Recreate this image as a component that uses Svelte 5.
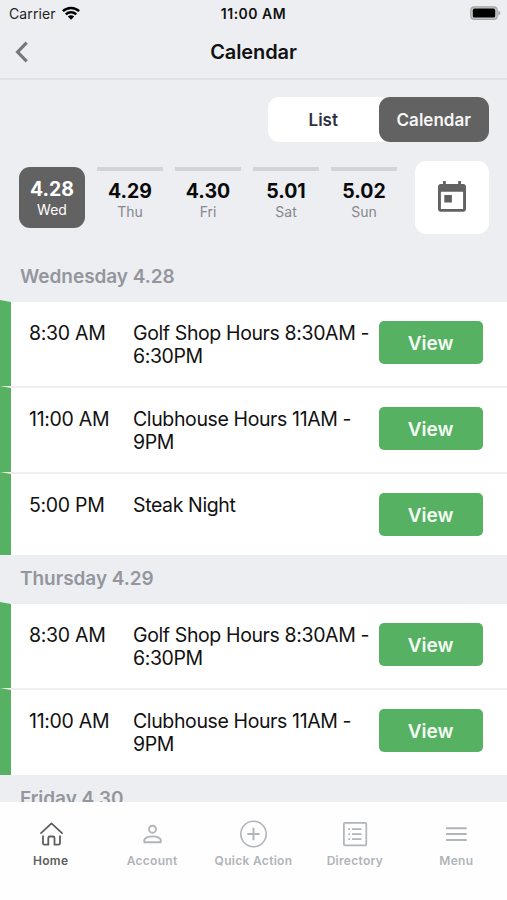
<script>
  const days = [
    { date: '4.28', day: 'Wed', active: true },
    { date: '4.29', day: 'Thu' },
    { date: '4.30', day: 'Fri' },
    { date: '5.01', day: 'Sat' },
    { date: '5.02', day: 'Sun' }
  ];
  const sections = [
    {
      title: 'Wednesday 4.28',
      events: [
        { time: '8:30 AM', lines: ['Golf Shop Hours 8:30AM -', '6:30PM'] },
        { time: '11:00 AM', lines: ['Clubhouse Hours 11AM -', '9PM'] },
        { time: '5:00 PM', lines: ['Steak Night'] }
      ]
    },
    {
      title: 'Thursday 4.29',
      events: [
        { time: '8:30 AM', lines: ['Golf Shop Hours 8:30AM -', '6:30PM'] },
        { time: '11:00 AM', lines: ['Clubhouse Hours 11AM -', '9PM'] }
      ]
    },
    { title: 'Friday 4.30', events: [] }
  ];
</script>

<div class="screen">
  <header>
    <div class="status">
      <div class="carrier">
        <span>Carrier</span>
        <svg width="18" height="14" viewBox="0 0 18 14">
          <g fill="none" stroke="#000" stroke-width="2.5">
            <path d="M0.9 5.2A11.6 11.6 0 0 1 17.1 5.2" />
            <path d="M3.8 8.3A7.4 7.4 0 0 1 14.2 8.3" />
          </g>
          <path d="M9 13.8L5.8 10.5A4.5 4.5 0 0 1 12.2 10.5Z" />
        </svg>
      </div>
      <div class="clock">11:00 AM</div>
      <div class="battery">
        <svg width="31" height="14" viewBox="0 0 31 14">
          <rect x="0.8" y="0.8" width="26.4" height="12.6" rx="3.4" fill="#c9c9cb" stroke="#a5a5a7" stroke-width="1.2" />
          <rect x="2.8" y="2.6" width="22.4" height="9" rx="1.6" />
          <path d="M28.3 4.8Q30.4 5.4 30.4 7.1T28.3 9.4Z" fill="#a5a5a7" />
        </svg>
      </div>
    </div>
    <div class="nav">
      <svg class="back" width="14" height="22" viewBox="0 0 14 22">
        <path d="M11.7 1.6L2.6 11L11.7 20.3" fill="none" stroke="#777" stroke-width="3.2" />
      </svg>
      <h1>Calendar</h1>
    </div>
  </header>

  <main>
    <div class="toggle">
      <button class="list">List</button>
      <button class="selected">Calendar</button>
    </div>
    <div class="days">
      {#each days as d}
        <div class="day" class:active={d.active}>
          <b>{d.date}</b>
          <span>{d.day}</span>
        </div>
      {/each}
      <button class="picker" aria-label="Pick a date">
        <svg width="28" height="31" viewBox="0 0 28 31">
          <path fill="#616161" fill-rule="evenodd" d="M5 0h2.800v3H20.200V0H23v3h2a3 3 0 0 1 3 3V27.800a3 3 0 0 1-3 3H3a3 3 0 0 1-3-3V6a3 3 0 0 1 3-3H5ZM2.900 10.700V28H25.100V10.700Z" />
          <rect x="6.300" y="14" width="7.600" height="7.500" fill="#616161" />
        </svg>
      </button>
    </div>

    {#each sections as s}
      <section>
        <h2>{s.title}</h2>
        {#each s.events as e}
          <div class="row">
            <svg class="stripe" width="11" preserveAspectRatio="none" viewBox="0 0 11 86">
              <path d="M0 0L11 2V86H0Z" fill="#57b163" />
            </svg>
            <div class="time">{e.time}</div>
            <div class="name">
              {#each e.lines as l}<div>{l}</div>{/each}
            </div>
            <button class="view">View</button>
          </div>
        {/each}
      </section>
    {/each}
  </main>

  <nav class="tabs">
    <div class="tab current">
      <svg width="28" height="28" viewBox="0 0 28 28" fill="none" stroke="#5e5e5e" stroke-width="1.8" stroke-linecap="round" stroke-linejoin="round">
        <path d="M4 13.200L14.500 3.400L25 13.200" />
        <path d="M6 16.200V23.300Q6 24.700 7.400 24.700H11.300V18Q11.300 16.500 12.800 16.500H16Q17.500 16.500 17.500 18V24.700H21.600Q23 24.700 23 23.300V16.200" />
      </svg>
      <span>Home</span>
    </div>
    <div class="tab">
      <svg width="28" height="28" viewBox="0 0 28 28" fill="none" stroke="#b1b4b8" stroke-width="1.900">
        <circle cx="14.500" cy="9.200" r="3.500" />
        <path d="M6.300 22.200V20.300C6.300 17.700 10.900 16.400 14.500 16.400S22.800 17.700 22.800 20.300V22.200Z" stroke-linejoin="round" />
      </svg>
      <span>Account</span>
    </div>
    <div class="tab">
      <svg width="28" height="28" viewBox="0 0 28 28" fill="none" stroke="#b1b4b8" stroke-width="1.600">
        <circle cx="14.500" cy="14" r="12.700" />
        <path d="M14.500 7.800V20.200M8.300 14H20.700" stroke-width="1.900" />
      </svg>
      <span>Quick Action</span>
    </div>
    <div class="tab">
      <svg width="28" height="28" viewBox="0 0 28 28" fill="none" stroke="#b1b4b8" stroke-width="1.700">
        <rect x="2.900" y="2.900" width="22.400" height="22.400" rx="1" />
        <path d="M7.300 9.200h1.800M7.300 14.200h1.800M7.300 19.200h1.800M11 9.200H20.500M11 14.200H20.500M11 19.200H20.500" />
      </svg>
      <span>Directory</span>
    </div>
    <div class="tab">
      <svg width="28" height="28" viewBox="0 0 28 28" stroke="#b1b4b8" stroke-width="2">
        <path d="M4.100 8.200H24.700M4.100 14.100H24.700M4.100 19.900H24.700" />
      </svg>
      <span>Menu</span>
    </div>
  </nav>
</div>

<style>
  :global(body) {
    margin: 0;
  }
  .screen {
    width: 507px;
    height: 900px;
    display: flex;
    flex-direction: column;
    overflow: hidden;
    background: #edeef2;
    color: #111;
    font-family: Inter, 'Liberation Sans', sans-serif;
  }
  .screen * {
    box-sizing: border-box;
  }
  button {
    border: 0;
    padding: 0;
    font: inherit;
  }
  header {
    flex: none;
    height: 80px;
    border-bottom: 2px solid #e0e1e4;
  }
  .status {
    height: 28px;
    display: grid;
    grid-template-columns: 1fr auto 1fr;
    align-items: center;
    font-size: 14px;
    line-height: 28px;
  }
  .carrier {
    display: flex;
    align-items: center;
    gap: 6px;
    padding-left: 9px;
    letter-spacing: 0.1px;
    color: #222;
  }
  .carrier svg {
    margin-top: -2px;
  }
  .clock {
    font-weight: 600;
    letter-spacing: 0.5px;
  }
  .battery {
    display: flex;
    justify-content: flex-end;
    padding: 0 6px 2px 0;
  }
  .nav {
    height: 50px;
    display: grid;
    grid-template-columns: 1fr auto 1fr;
    align-items: center;
  }
  .back {
    margin: 0 0 2px 14.5px;
  }
  h1 {
    margin: 0;
    font-size: 20px;
    line-height: 24px;
    font-weight: 600;
    letter-spacing: -0.1px;
    padding-bottom: 2px;
  }
  main {
    flex: 1;
    min-height: 0;
    overflow: hidden;
  }
  .toggle {
    width: 221px;
    height: 45px;
    margin: 17px 18px 0 auto;
    display: flex;
    background: #fff;
    border-radius: 11px;
  }
  .toggle button {
    width: 110.5px;
    border-radius: 11px;
    background: none;
    font-size: 17px;
    font-weight: 600;
    color: #2e3040;
  }
  .toggle .selected {
    background: #626262;
    color: #f6f6f6;
  }
  .days {
    display: flex;
    gap: 12px;
    height: 73px;
    margin: 19px 18px 0 19px;
  }
  .day {
    width: 66px;
    height: 61px;
    margin-top: 6px;
    border-top: 4px solid #d2d3d7;
    display: flex;
    flex-direction: column;
    align-items: center;
    padding-top: 8px;
  }
  .day b {
    font-size: 19.5px;
    line-height: 24px;
    font-weight: 700;
    color: #0a0a0a;
  }
  .day span {
    font-size: 14px;
    line-height: 18px;
    color: #86878c;
  }
  .day.active {
    background: #626262;
    border: 0;
    border-radius: 11px;
    padding-top: 10px;
  }
  .day.active b,
  .day.active span {
    color: #fff;
  }
  .picker {
    margin-left: auto;
    width: 74px;
    border-radius: 11px;
    background: #fff;
    display: flex;
    align-items: center;
    justify-content: center;
  }
  .picker svg {
    margin-bottom: 3px;
  }
  h2 {
    margin: 0;
    height: 49px;
    padding: 11px 0 0 20px;
    font-size: 19px;
    line-height: 26px;
    font-weight: 600;
    letter-spacing: -0.05px;
    color: #93969d;
  }
  section:first-of-type h2 {
    height: 68px;
    padding-top: 30px;
  }
  .row {
    position: relative;
    display: flex;
    align-items: flex-start;
    padding: 19px 24.5px 19px 29px;
    background: #fff;
    font-size: 19.5px;
    line-height: 23px;
  }
  .row:not(:last-child) {
    height: 86px;
    border-bottom: 2px solid #efeff1;
  }
  .row:has(.name div + div):last-child {
    height: 85px;
  }
  .stripe {
    position: absolute;
    left: 0;
    top: -2px;
    height: calc(100% + 2px);
  }
  .time,
  .name {
    padding-top: 1px;
  }
  .time {
    width: 104px;
    white-space: nowrap;
    letter-spacing: -0.3px;
  }
  .name {
    flex: 1;
    min-width: 0;
    white-space: nowrap;
    letter-spacing: -0.38px;
  }
  .view {
    width: 104px;
    height: 43px;
    padding-top: 1px;
    border-radius: 5px;
    background: #57b163;
    color: #f4fbf4;
    font-size: 19px;
    font-weight: 600;
  }
  .tabs {
    flex: none;
    height: 98px;
    display: grid;
    grid-template-columns: repeat(5, 1fr);
    padding-top: 18px;
    background: #fefefe;
  }
  .tab {
    display: flex;
    flex-direction: column;
    align-items: center;
    font-size: 12px;
    line-height: 16px;
    font-weight: 600;
    color: #b1b4b8;
    letter-spacing: 0.3px;
  }
  .tab span {
    margin-top: 5px;
    white-space: nowrap;
  }
  .current {
    color: #5e5e5e;
  }
</style>
